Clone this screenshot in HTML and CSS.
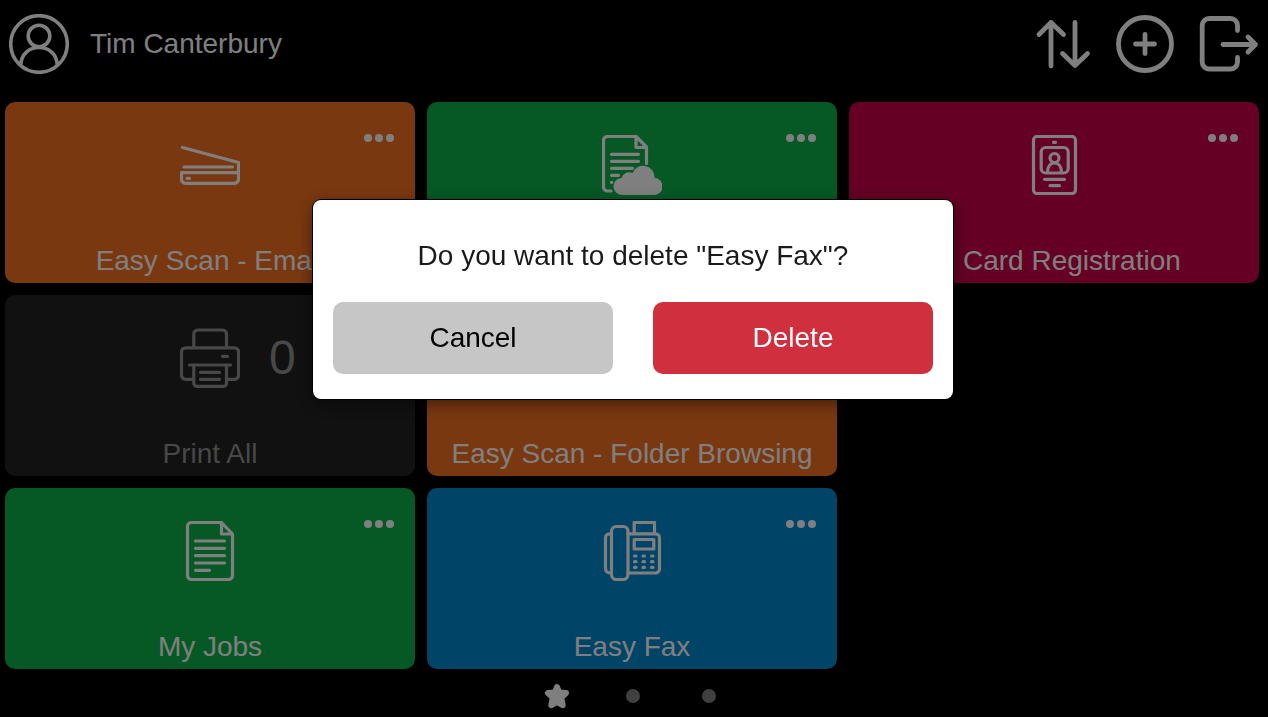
FILE: index.html
```html
<!DOCTYPE html>
<html lang="en">
<head>
  <meta charset="utf-8">
  <meta name="viewport" content="width=device-width, initial-scale=1">
  <title>Home</title>
  <link rel="stylesheet" href="styles.css">
</head>
<body>
  <div class="page">
    <header class="header">
      <svg class="icon icon-user" viewBox="0 0 60 60" aria-hidden="true">
        <circle cx="30" cy="30" r="28.3"/>
        <circle cx="30" cy="22" r="10.8"/>
        <path d="M11.7 50.5C12.5 40 20 33.5 30 33.5S47.5 40 48.3 50.5"/>
      </svg>
      <span class="user-name">Tim Canterbury</span>
      <div class="header-actions">
        <button type="button" class="icon-button" aria-label="Sort">
          <svg class="icon" viewBox="0 0 60 60" aria-hidden="true">
            <path d="M18 52V8.500M6 20.500 18 8.500l12.500 12M42 8.500v43M29.500 39.500 42 51.500l12.500-12"/>
          </svg>
        </button>
        <button type="button" class="icon-button" aria-label="Add">
          <svg class="icon" viewBox="0 0 60 60" aria-hidden="true">
            <circle cx="29" cy="30" r="26.5"/>
            <path d="M29 20.500v19M19.500 30h19"/>
          </svg>
        </button>
        <button type="button" class="icon-button" aria-label="Log out">
          <svg class="icon" viewBox="0 0 60 60" aria-hidden="true">
            <path d="M38.500 16.500V11.500a7 7 0 0 0-7-7H10.200a7 7 0 0 0-7 7v36.500a7 7 0 0 0 7 7h21.300a7 7 0 0 0 7-7v-4.500"/>
            <path d="M24 30.500h32M49 23l7.500 7.500L49 38"/>
          </svg>
        </button>
      </div>
    </header>

    <main class="tiles">
      <section class="tile orange">
        <div class="tile-icon">
          <svg class="icon" viewBox="0 0 60 60" aria-hidden="true">
            <path d="M2.500 12.500 58.500 27.500V44.300a4 4 0 0 1-4 4H5.500a4 4 0 0 1-4-4V37.700H58.500M4 32h48.500M7 43.300h2.500"/>
          </svg>
        </div>
        <a href="#" class="tile-title">Easy Scan - Email</a>
        <button type="button" class="more" aria-label="More options"><i></i><i></i><i></i></button>
      </section>

      <section class="tile green">
        <a href="#" class="tile-icon" aria-label="Cloud">
          <svg class="icon" viewBox="0 0 60 60" aria-hidden="true">
            <path d="M9 56H5.500a4 4 0 0 1-4-4V5.500a4 4 0 0 1 4-4H34L44.500 12v16.500M34 1.500V12.500H44.500"/>
            <path d="M9.500 19.300h27M9.500 26.300h27M9.500 33.300h21M9.500 40.300h7M9.500 47.300h.3"/>
            <path class="solid" d="M20.500 60a8.500 8.500 0 0 1-1-17 7.800 7.800 0 0 1 11-5 11.400 11.400 0 0 1 22 4.800A8.600 8.600 0 0 1 51.500 60z"/>
          </svg>
        </a>
        <button type="button" class="more" aria-label="More options"><i></i><i></i><i></i></button>
      </section>

      <section class="tile crimson">
        <div class="tile-icon">
          <svg class="icon" viewBox="0 0 60 60" aria-hidden="true">
            <rect x="9.500" y="1.500" width="42" height="57" rx="3.500"/>
            <rect x="17.200" y="12.500" width="27" height="25.500" rx="4.500"/>
            <circle cx="30.500" cy="23" r="4.500"/>
            <path d="M23.500 37.500c0-6 3-9.500 7-9.500s7 3.500 7 9.500M29.500 7.300h2M20.500 44.300h20M26 50.700h9.500"/>
          </svg>
        </div>
        <a href="#" class="tile-title">ID Card Registration</a>
        <button type="button" class="more" aria-label="More options"><i></i><i></i><i></i></button>
      </section>

      <section class="tile disabled">
        <div class="tile-icon">
          <svg class="icon" viewBox="0 0 60 60" aria-hidden="true">
            <path d="M13.800 19V6a4 4 0 0 1 4-4h24.700a4 4 0 0 1 4 4v13"/>
            <path d="M12.500 51.300H5.500a4 4 0 0 1-4-4V23.800a4 4 0 0 1 4-4h49a4 4 0 0 1 4 4v23.500a4 4 0 0 1-4 4H48"/>
            <path d="M9.500 37h41M13.800 37v18.300a3 3 0 0 0 3 3h26.700a3 3 0 0 0 3-3V37M20.500 44.300h19M20.500 51.300h19M42.500 28.300h5"/>
          </svg>
          <span class="count">0</span>
        </div>
        <span class="tile-title">Print All</span>
      </section>

      <section class="tile orange">
        <div class="tile-icon">
          <svg class="icon" viewBox="0 0 60 60" aria-hidden="true">
            <path d="M2.500 12.500 58.500 27.500V44.300a4 4 0 0 1-4 4H5.500a4 4 0 0 1-4-4V37.700H58.500M4 32h48.500M7 43.300h2.500"/>
          </svg>
        </div>
        <a href="#" class="tile-title">Easy Scan - Folder Browsing</a>
      </section>

      <section class="tile green first-column">
        <div class="tile-icon">
          <svg class="icon" viewBox="0 0 60 60" aria-hidden="true">
            <path d="M41.500 1.500H11.500a4 4 0 0 0-4 4v49a4 4 0 0 0 4 4h37a4 4 0 0 0 4-4V13zM41.500 1.500V13h11"/>
            <path d="M15.500 20h29M15.500 27.300h29M15.500 34.700h29M15.500 42h29M15.500 49.300h14"/>
          </svg>
        </div>
        <a href="#" class="tile-title">My Jobs</a>
        <button type="button" class="more" aria-label="More options"><i></i><i></i><i></i></button>
      </section>

      <section class="tile blue">
        <div class="tile-icon">
          <svg class="icon" viewBox="0 0 60 60" aria-hidden="true">
            <rect x="9.500" y="5.500" width="16.500" height="53" rx="5"/>
            <path d="M9 12.800H7.500a4 4 0 0 0-4 4v31a4 4 0 0 0 4 4H9M26 12.800h27.500a4 4 0 0 1 4 4V48a4 4 0 0 1-4 4H26"/>
            <path d="M32.200 12.500v-11h20.300v11"/>
            <rect x="32.200" y="18.500" width="19.600" height="9.500"/>
            <path d="M32.500 35h1.500M41 35h1.500M49.500 35h1.500M32.500 40.700h1.500M41 40.700h1.500M49.500 40.700h1.500M32.500 46.400h1.500M41 46.400h1.500M49.500 46.400h1.500"/>
          </svg>
        </div>
        <a href="#" class="tile-title">Easy Fax</a>
        <button type="button" class="more" aria-label="More options"><i></i><i></i><i></i></button>
      </section>
    </main>

    <nav class="pager" aria-label="Pages">
      <button type="button" class="pager-item" aria-label="Favorites" aria-current="page">
        <svg class="star" viewBox="0 0 26 26" aria-hidden="true">
          <path d="M13 4l2.200 5.600 6.800.4-4.800 4.600 1.500 7.600-5.700-3.400-5.700 3.400 1.500-7.600L4 10l6.800-.4z"/>
        </svg>
      </button>
      <button type="button" class="pager-item" aria-label="Page 2"><i class="dot"></i></button>
      <button type="button" class="pager-item" aria-label="Page 3"><i class="dot"></i></button>
    </nav>
  </div>

  <div class="overlay">
    <div class="dialog" role="dialog" aria-modal="true" aria-labelledby="dialog-text">
      <p class="dialog-text" id="dialog-text">Do you want to delete "Easy Fax"?</p>
      <div class="dialog-buttons">
        <button type="button" class="button cancel">Cancel</button>
        <button type="button" class="button delete">Delete</button>
      </div>
    </div>
  </div>
</body>
</html>
```

FILE: styles.css
```css
* {
  box-sizing: border-box;
}

body {
  margin: 0;
  background-color: #000000;
  color: #ffffff;
  font-family: "Liberation Sans", Arial, sans-serif;
  font-size: 28px;
  line-height: 32px;
}

button {
  padding: 0;
  border: none;
  background: none;
  color: inherit;
  font: inherit;
  cursor: pointer;
}

a {
  color: inherit;
  text-decoration: none;
}

.page {
  display: flex;
  flex-direction: column;
  min-height: 100vh;
}

.icon {
  display: block;
  width: 60px;
  height: 60px;
  fill: none;
  stroke: currentColor;
  stroke-width: 3.2;
  stroke-linecap: round;
  stroke-linejoin: round;
}

/* Header */

.header {
  display: flex;
  align-items: center;
  gap: 21px;
  padding: 14px 9px 28px;
}

.icon-user {
  stroke-width: 3.6;
}

.icon-button .icon {
  stroke-width: 4.8;
}

.header-actions {
  display: flex;
  gap: 23px;
  margin-left: auto;
}

/* Tiles */

.tiles {
  flex: 1;
  display: grid;
  grid-template-columns: repeat(3, 1fr);
  grid-auto-rows: 1fr;
  gap: 12px;
  padding: 0 9px 0 5px;
}

.tile {
  position: relative;
  display: flex;
  flex-direction: column;
  justify-content: space-between;
  padding: 33px 8px 6px;
  border-radius: 10px;
  text-align: center;
}

.first-column {
  grid-column: 1;
}

.orange {
  background-color: #f47021;
}

.green {
  background-color: #0cb34a;
}

.crimson {
  background-color: #ca0048;
}

.blue {
  background-color: #0088ce;
}

.disabled {
  background-color: #222222;
  color: #909090;
}

.tile-icon {
  display: grid;
  grid-template-columns: 1fr 60px 1fr;
  align-items: center;
  gap: 29px;
}

.tile-icon .icon {
  grid-column: 2;
}

.icon .solid {
  fill: currentColor;
  stroke: none;
}

.count {
  font-size: 48px;
  text-align: left;
}

.more {
  position: absolute;
  top: 32px;
  right: 21px;
  display: flex;
  gap: 3px;
}

.more i {
  width: 8px;
  height: 8px;
  border-radius: 50%;
  background-color: #ffffff;
}

/* Page switcher */

.pager {
  display: flex;
  justify-content: center;
  gap: 50px;
  height: 48px;
  padding: 6px 2px 0 0;
}

.pager-item {
  display: flex;
  align-items: center;
  justify-content: center;
  width: 26px;
}

.star {
  width: 26px;
  height: 26px;
  fill: #ffffff;
  stroke: #ffffff;
  stroke-width: 6;
  stroke-linejoin: round;
}

.dot {
  width: 14px;
  height: 14px;
  border-radius: 50%;
  background-color: #808080;
}

/* Delete dialog */

.overlay {
  position: fixed;
  inset: 0;
  display: flex;
  align-items: flex-start;
  justify-content: center;
  padding: 200px 8px 0 6px;
  background-color: rgba(0, 0, 0, 0.5);
}

.dialog {
  width: 100%;
  max-width: 640px;
  padding: 40px 20px 25px;
  border-radius: 8px;
  background-color: #ffffff;
  box-shadow: 0 0 0 1px #000000, 0 4px 16px rgba(0, 0, 0, 0.5);
}

.dialog-text {
  margin: 0 0 30px;
  color: #1a1a1a;
  text-align: center;
}

.dialog-buttons {
  display: flex;
  gap: 40px;
}

.button {
  flex: 1;
  height: 72px;
  border-radius: 10px;
}

.cancel {
  background-color: #c6c6c6;
  color: #000000;
}

.delete {
  background-color: #d02f3e;
  color: #ffffff;
}
```
